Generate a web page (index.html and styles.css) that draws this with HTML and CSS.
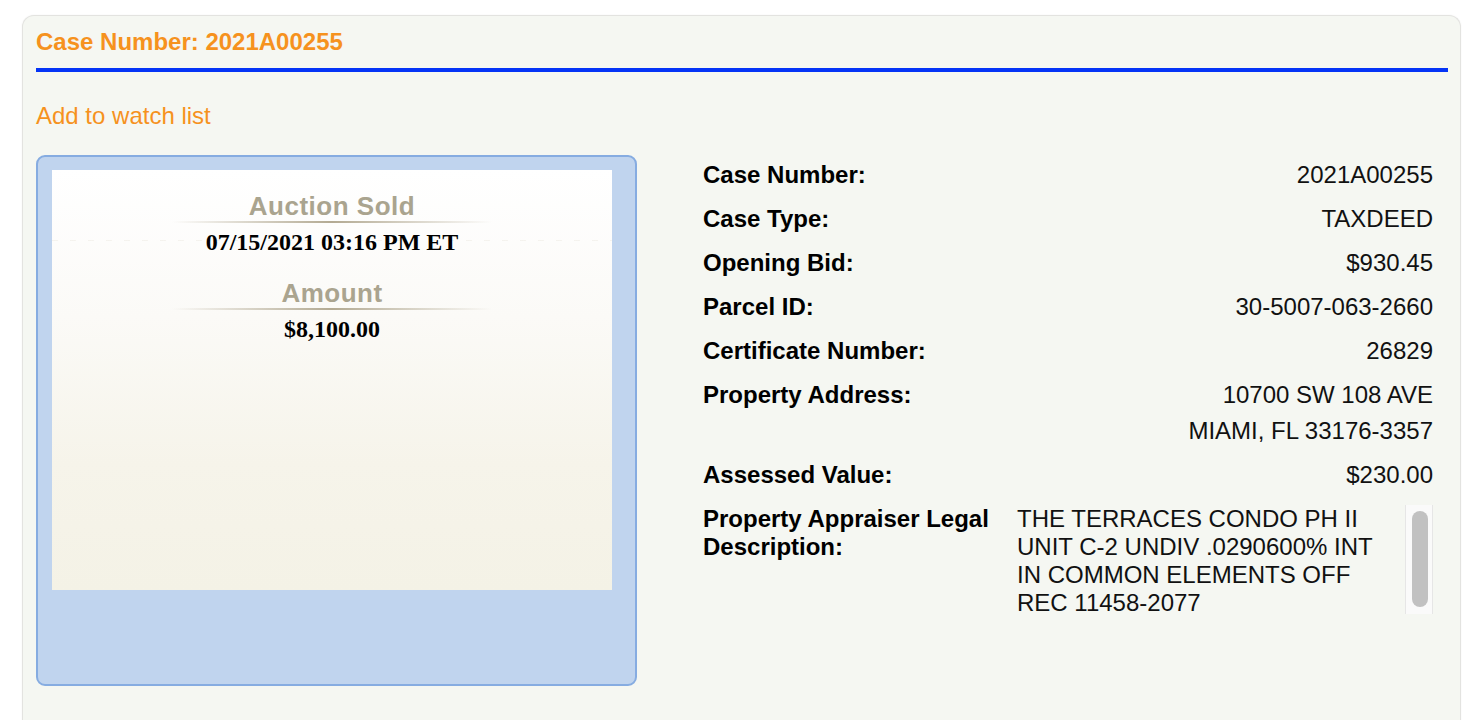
FILE: index.html
```html
<!DOCTYPE html>
<html lang="en">
<head>
<meta charset="utf-8">
<title>Case 2021A00255</title>
<link rel="stylesheet" href="styles.css">
</head>
<body>
<div class="panel">
  <div class="panel-head">Case Number: 2021A00255</div>
  <div class="watch"><a class="watch-link" href="#">Add to watch list</a></div>
  <div class="content">
    <div class="status-box">
      <div class="status-card">
        <div class="status-section">
          <div class="status-title">Auction Sold</div>
          <div class="status-rule"></div>
          <div class="status-value">07/15/2021 03:16 PM ET</div>
        </div>
        <div class="status-section second">
          <div class="status-title">Amount</div>
          <div class="status-rule"></div>
          <div class="status-value">$8,100.00</div>
        </div>
      </div>
    </div>
    <div class="details">
      <div class="row">
        <div class="label">Case Number:</div>
        <div class="value">2021A00255</div>
      </div>
      <div class="row">
        <div class="label">Case Type:</div>
        <div class="value">TAXDEED</div>
      </div>
      <div class="row">
        <div class="label">Opening Bid:</div>
        <div class="value">$930.45</div>
      </div>
      <div class="row">
        <div class="label">Parcel ID:</div>
        <div class="value">30-5007-063-2660</div>
      </div>
      <div class="row">
        <div class="label">Certificate Number:</div>
        <div class="value">26829</div>
      </div>
      <div class="row">
        <div class="label">Property Address:</div>
        <div class="value multi">
          <div>10700 SW 108 AVE</div>
          <div>MIAMI, FL 33176-3357</div>
        </div>
      </div>
      <div class="row">
        <div class="label">Assessed Value:</div>
        <div class="value">$230.00</div>
      </div>
      <div class="row">
        <div class="label">Property Appraiser Legal Description:</div>
        <div class="legal">
          <div class="legal-text">THE TERRACES CONDO PH II UNIT C-2 UNDIV .0290600% INT IN COMMON ELEMENTS OFF REC 11458-2077</div>
          <div class="scroll-track"><div class="scroll-thumb"></div></div>
        </div>
      </div>
    </div>
  </div>
</div>
</body>
</html>
```

FILE: styles.css
```css
html, body {
  margin: 0;
  padding: 0;
  background: #ffffff;
}

body {
  padding: 15px 19px 0 22px;
  font-family: "Liberation Sans", Arial, Helvetica, sans-serif;
  font-size: 24px;
  line-height: 28px;
  color: #000;
}

.panel {
  box-sizing: border-box;
  width: 1439px;
  min-height: 740px;
  background: #f5f7f2;
  border: 1px solid #e3e3e0;
  border-bottom: none;
  border-radius: 12px 12px 0 0;
  box-shadow: 0 0 2px rgba(0, 0, 0, 0.06);
  padding: 12px 12px 0 13px;
}

.panel-head {
  color: #f6921e;
  font-weight: bold;
  padding-bottom: 12px;
  border-bottom: 4px solid #0534f6;
}

.watch {
  margin-top: 30px;
}

.watch-link {
  color: #f6921e;
  text-decoration: none;
}

.content {
  display: flex;
  align-items: flex-start;
  margin-top: 25px;
}

.status-box {
  box-sizing: border-box;
  flex: 0 0 601px;
  height: 531px;
  background: #c0d4ee;
  border: 2px solid #86ace1;
  border-radius: 9px;
  padding: 13px 14px;
}

.status-card {
  width: 560px;
  height: 420px;
  box-sizing: border-box;
  padding-top: 21px;
  text-align: center;
  background:
    repeating-linear-gradient(90deg, rgba(220, 215, 200, 0.25) 0 6px, transparent 6px 18px) 0 70px / 100% 1px no-repeat,
    linear-gradient(180deg, #ffffff 0%, #fbfaf7 35%, #f6f4ea 70%, #f4f2e6 100%);
}

.status-section.second {
  margin-top: 22px;
}

.status-title {
  font-size: 26px;
  line-height: 30px;
  font-weight: bold;
  letter-spacing: 0.5px;
  color: #aaa48f;
}

.status-rule {
  width: 320px;
  height: 2px;
  margin: 0 auto;
  background: linear-gradient(90deg, rgba(168, 157, 133, 0) 0%, #b3aa93 50%, rgba(168, 157, 133, 0) 100%);
}

.status-value {
  margin-top: 5px;
  font-family: "Liberation Serif", "Times New Roman", serif;
  font-weight: bold;
  font-size: 24px;
  line-height: 28px;
  color: #000;
}

.details {
  flex: 0 0 730px;
  margin-left: 66px;
  padding-top: 6px;
}

.row {
  display: grid;
  grid-template-columns: 314px 1fr;
  margin-bottom: 16px;
}

.label {
  font-weight: bold;
  padding-right: 20px;
}

.value {
  text-align: right;
  color: #111;
}

.value.multi {
  display: flex;
  flex-direction: column;
  align-items: flex-end;
  gap: 8px;
}

.legal {
  display: flex;
  justify-content: space-between;
  align-items: flex-start;
  color: #111;
}

.legal-text {
  width: 370px;
}

.scroll-track {
  box-sizing: border-box;
  width: 28px;
  height: 109px;
  background: #fafafa;
  border-left: 1px solid #e6e6e6;
  border-right: 1px solid #e6e6e6;
  padding: 6px 4px 7px 6px;
}

.scroll-thumb {
  height: 100%;
  background: #c1c1c1;
  border-radius: 8px;
}
```
